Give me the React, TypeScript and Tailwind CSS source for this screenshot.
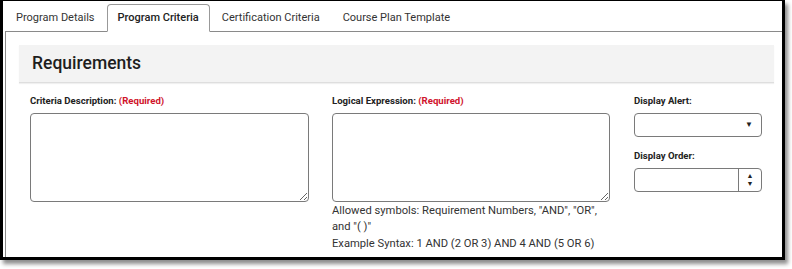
export default function App() {
  return (
    <div className="w-[792px] h-[269px] bg-white font-['Roboto',sans-serif] text-[#333]">
      <div className="w-[785px] h-[260px] border-t border-l-[3px] border-r-[3px] border-b-[3px] border-black shadow-[3px_4px_4px_rgba(0,0,0,0.45)] overflow-hidden bg-white">
        <div className="pl-[2px] pt-[3px]">
          <div className="flex h-[28px] items-stretch">
            <div className="pl-[10px] pr-[11px] flex items-center text-[11px] border border-transparent">Program Details</div>
            <div className="px-[10px] flex items-center text-[11px] font-medium text-[#222] border border-[#999] border-b-white rounded-t-[4px] relative z-10 bg-white">Program Criteria</div>
            <div className="px-[11px] flex items-center text-[11px] border border-transparent">Certification Criteria</div>
            <div className="px-[10px] flex items-center text-[11px] border border-transparent">Course Plan Template</div>
          </div>
          <div className="-mt-px border-t border-l border-[#8a8a8a] h-[240px] pl-[13px] pt-[13px] pr-[8px]">
            <div className="h-[38px] bg-[#f3f3f3] border-b border-[#dedede] shadow-[0_1px_1px_rgba(0,0,0,0.06)] flex items-center pl-[13px]">
              <h2 className="text-[17.5px] font-medium text-[#1e1e1e]">Requirements</h2>
            </div>
            <div className="flex pl-[11px] pt-[11px]">
              <div className="w-[302px]">
                <label className="block text-[9.6px] font-bold text-[#222] leading-[14px] mb-[5px]">
                  Criteria Description: <span className="text-[#d0142c]">(Required)</span>
                </label>
                <textarea className="block w-[279px] h-[89px] border border-[#7a7a7a] rounded-[4px] outline-none" />
              </div>
              <div className="w-[302px]">
                <label className="block text-[9.6px] font-bold text-[#222] leading-[14px] mb-[5px]">
                  Logical Expression: <span className="text-[#d0142c]">(Required)</span>
                </label>
                <textarea className="block w-[278px] h-[89px] border border-[#7a7a7a] rounded-[4px] outline-none" />
                <p className="w-[282px] text-[11.2px] leading-[16px] mt-px text-[#333]">
                  Allowed symbols: Requirement Numbers, "AND", "OR", and "( )"
                </p>
                <p className="text-[11.2px] leading-[16px] mt-px text-[#333]">Example Syntax: 1 AND (2 OR 3) AND 4 AND (5 OR 6)</p>
              </div>
              <div className="w-[128px]">
                <label className="block text-[9.6px] font-bold text-[#222] leading-[14px] mb-[5px]">Display Alert:</label>
                <div className="h-[24px] border border-[#7a7a7a] rounded-[4px] flex items-center justify-end pr-[8px]">
                  <span className="text-[8px] text-[#222]">▼</span>
                </div>
                <label className="block text-[9.6px] font-bold text-[#222] leading-[14px] mt-[12px] mb-[5px]">Display Order:</label>
                <div className="h-[24px] border border-[#7a7a7a] rounded-[4px] flex">
                  <div className="flex-1" />
                  <div className="w-[23px] border-l border-[#7a7a7a] flex flex-col items-center justify-center leading-[8px]">
                    <span className="text-[7px] text-[#222]">▲</span>
                    <span className="text-[7px] text-[#222]">▼</span>
                  </div>
                </div>
              </div>
            </div>
          </div>
        </div>
      </div>
    </div>
  )
}
